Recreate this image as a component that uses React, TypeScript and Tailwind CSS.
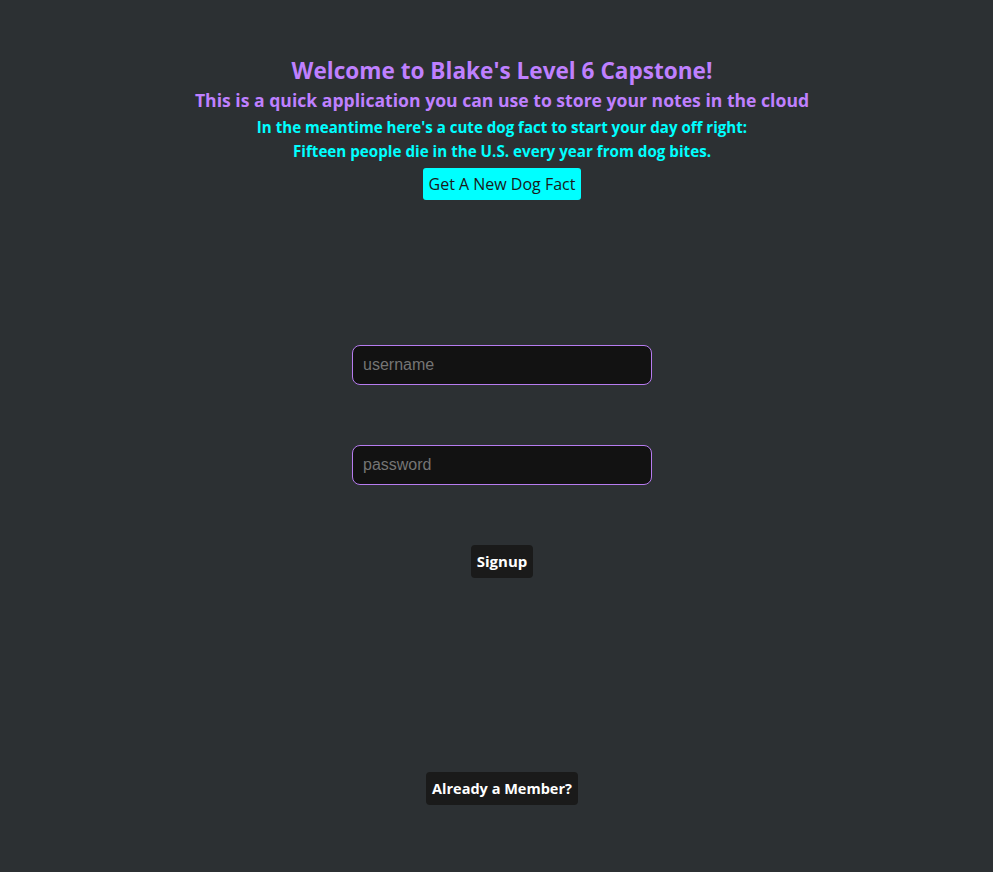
export default function App() {
  return (
    <div className="min-h-[872px] bg-[#2c3033] flex flex-col items-center pl-[11px] font-['Open_Sans',sans-serif]">
      <div className="flex flex-col items-center pt-[56px]">
        <h1 className="text-[22.6px] leading-[30px] font-bold text-[#bf80ff]">
          Welcome to Blake's Level 6 Capstone!
        </h1>
        <h2 className="text-[17.6px] leading-[29px] font-bold text-[#bf80ff]">
          This is a quick application you can use to store your notes in the cloud
        </h2>
        <h3 className="text-[15.1px] leading-[24px] font-bold text-[#00ffff]">
          In the meantime here's a cute dog fact to start your day off right:
        </h3>
        <h3 className="text-[15.2px] leading-[24px] font-bold text-[#00ffff]">
          Fifteen people die in the U.S. every year from dog bites.
        </h3>
        <button className="mt-[5px] h-[32px] px-[6px] rounded-[3px] bg-[#00ffff] text-[#1a1a1a] text-[16px]">
          Get A New Dog Fact
        </button>
      </div>

      <form className="flex flex-col items-center mt-[145px]">
        <input
          placeholder="username"
          className="w-[300px] h-[40px] rounded-[8px] border border-[#b77cf0] bg-[#121212] px-[10px] text-[16px] text-white placeholder:text-[#757575] font-['Liberation_Sans',sans-serif] outline-none"
        />
        <input
          type="password"
          placeholder="password"
          className="mt-[60px] w-[300px] h-[40px] rounded-[8px] border border-[#b77cf0] bg-[#121212] px-[10px] text-[16px] text-white placeholder:text-[#757575] font-['Liberation_Sans',sans-serif] outline-none"
        />
        <button type="button" className="mt-[60px] h-[33px] px-[6px] rounded-[4px] bg-[#1a1a1a] text-white text-[15px] font-bold">
          Signup
        </button>
      </form>

      <button className="mt-[194px] h-[33px] px-[6px] rounded-[4px] bg-[#1a1a1a] text-white text-[14.5px] font-bold">
        Already a Member?
      </button>
    </div>
  )
}
